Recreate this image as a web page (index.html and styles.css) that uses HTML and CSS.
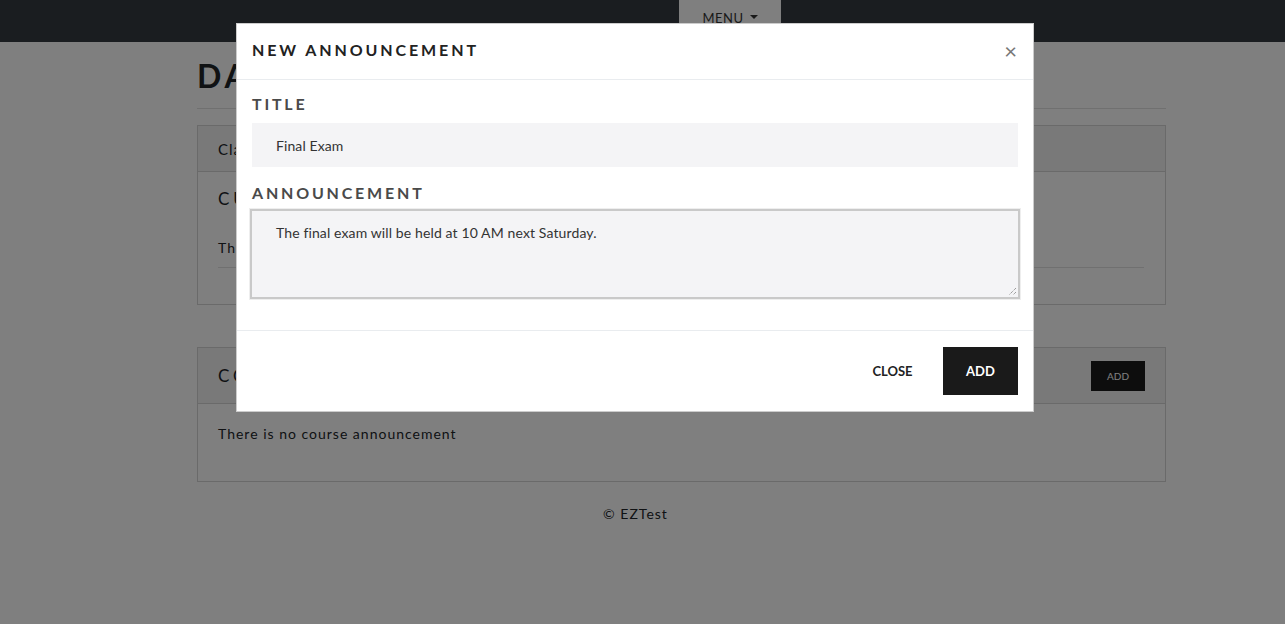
FILE: index.html
```html
<!DOCTYPE html>
<html>
<head>
<meta charset="utf-8">
<title>Dashboard</title>
<link rel="stylesheet" href="styles.css">
</head>
<body>
<nav class="navbar">
  <div class="menu-btn">MENU <span class="caret"></span></div>
</nav>
<main class="container">
  <h1 class="page-title">DASHBOARD</h1>
  <hr class="rule">
  <section class="card">
    <div class="card-header">Class information</div>
    <div class="card-body">
      <h2 class="card-title">CURRENT COURSE</h2>
      <p class="card-text">The course has no description</p>
      <hr class="inner-rule">
    </div>
  </section>
  <section class="card card-second">
    <div class="card-header header-flex">
      <h2 class="card-title no-margin">COURSE ANNOUNCEMENTS</h2>
      <button class="small-btn">ADD</button>
    </div>
    <div class="card-body body-second">
      <p class="card-text">There is no course announcement</p>
    </div>
  </section>
  <footer class="site-footer">© EZTest</footer>
</main>
<div class="backdrop"></div>
<div class="modal">
  <div class="modal-header">
    <h3 class="modal-title">NEW ANNOUNCEMENT</h3>
    <span class="close-x">×</span>
  </div>
  <div class="modal-body">
    <label class="field-label">TITLE</label>
    <div class="input">Final Exam</div>
    <label class="field-label second">ANNOUNCEMENT</label>
    <div class="textarea">The final exam will be held at 10 AM next Saturday.
      <svg class="grip" width="9" height="9" viewBox="0 0 9 9"><path d="M8 1L1 8M8 5L5 8" stroke="#777" stroke-width="1" stroke-dasharray="1 1"/></svg>
    </div>
  </div>
  <div class="modal-footer">
    <button class="btn-link">CLOSE</button>
    <button class="btn-dark">ADD</button>
  </div>
</div>
</body>
</html>
```
FILE: styles.css
```css
html, body {
  margin: 0;
  padding: 0;
  background: #fff;
  font-family: Lato, "Open Sans", sans-serif;
  color: #212529;
  height: 100%;
  overflow: hidden;
}
.navbar {
  height: 42px;
  background: #343a40;
  display: flex;
  padding-left: 679px;
}
.menu-btn {
  width: 102px;
  height: 42px;
  background: #fff;
  color: #333;
  font-size: 13px;
  letter-spacing: 0.5px;
  display: flex;
  align-items: flex-start;
  justify-content: center;
  padding-top: 10px;
  box-sizing: border-box;
  gap: 6px;
}
.caret {
  display: inline-block;
  width: 0;
  height: 0;
  margin-top: 5px;
  border-left: 4px solid transparent;
  border-right: 4px solid transparent;
  border-top: 4px solid #333;
}
.container {
  width: 969px;
  margin-left: 197px;
}
.page-title {
  margin: 14px 0 0;
  font-size: 32px;
  font-weight: 700;
  letter-spacing: 4px;
  line-height: 40px;
}
.rule {
  margin: 12px 0 16px;
  border: 0;
  border-top: 1px solid #e0e0e0;
}
.card {
  border: 1px solid #d5d5d5;
  background: #fff;
}
.card-header {
  background: #f2f2f2;
  border-bottom: 1px solid #d5d5d5;
  padding: 0 20px;
  display: flex;
  align-items: center;
  font-size: 15px;
  letter-spacing: 1px;
  box-sizing: border-box;
  height: 46px;
}
.card-body {
  padding: 16px 21px 36px 20px;
}
.card-title {
  margin: 0;
  font-size: 17px;
  letter-spacing: 4px;
  font-weight: 400;
}
.card-text {
  margin: 30px 0 0;
  font-size: 14px;
  letter-spacing: 1px;
}
.inner-rule {
  margin: 11px 0 0;
  border: 0;
  border-top: 1px solid #e0e0e0;
}
.card-second {
  margin-top: 42px;
}
.header-flex {
  height: 56px;
  justify-content: space-between;
}
.no-margin {
  margin: 0;
}
.small-btn {
  width: 54px;
  height: 30px;
  background: #1a1a1a;
  color: #fff;
  border: 0;
  font-family: Lato, sans-serif;
  font-size: 10px;
}
.body-second {
  padding-top: 3px;
  padding-bottom: 39px;
}
.body-second .card-text {
  margin-top: 18px;
}
.site-footer {
  text-align: center;
  margin-top: 23px;
  font-size: 14px;
  letter-spacing: 1px;
  padding-right: 92px;
}
.backdrop {
  position: fixed;
  inset: 0;
  background: rgba(0, 0, 0, 0.5);
}
.modal {
  position: fixed;
  left: 236px;
  top: 23px;
  width: 798px;
  background: #fff;
  border: 1px solid rgba(0, 0, 0, 0.2);
  box-sizing: border-box;
}
.modal-header {
  height: 56px;
  border-bottom: 1px solid #e9ecef;
  display: flex;
  align-items: center;
  justify-content: space-between;
  padding: 0 16px 4px 15px;
  box-sizing: border-box;
}
.modal-title {
  margin: 0;
  font-size: 16px;
  font-weight: 700;
  letter-spacing: 2.9px;
  color: #222;
}
.close-x {
  font-size: 22px;
  color: #777;
  line-height: 1;
  margin-top: 2px;
}
.modal-body {
  padding: 12px 15px 31px;
  display: flex;
  flex-direction: column;
}
.field-label {
  font-size: 16px;
  font-weight: 700;
  letter-spacing: 2.8px;
  line-height: 24px;
  color: #4a4a4a;
  margin-bottom: 7px;
}
.field-label.second {
  margin-top: 14px;
  margin-bottom: 4px;
}
.input {
  height: 44px;
  background: #f4f4f6;
  padding-left: 24px;
  display: flex;
  align-items: center;
  font-size: 14px;
  letter-spacing: 0.1px;
  color: #333;
}
.textarea {
  position: relative;
  height: 90px;
  margin: 0 -2px;
  background: #f4f4f6;
  border: 2px solid #c9c9c9;
  outline: 1px solid #eeeeee;
  box-sizing: border-box;
  padding: 13px 24px;
  font-size: 14px;
  letter-spacing: 0.12px;
  color: #333;
}
.grip {
  position: absolute;
  right: 1px;
  bottom: 1px;
}
.modal-footer {
  border-top: 1px solid #e9ecef;
  padding: 16px 15px 16px;
  display: flex;
  justify-content: flex-end;
  gap: 13px;
}
.btn-link,
.btn-dark {
  width: 75px;
  height: 48px;
  border: 0;
  font-family: Lato, sans-serif;
  font-size: 13px;
  font-weight: 700;
}
.btn-link {
  background: transparent;
  color: #222;
}
.btn-dark {
  background: #1a1a1a;
  color: #fff;
}
```
